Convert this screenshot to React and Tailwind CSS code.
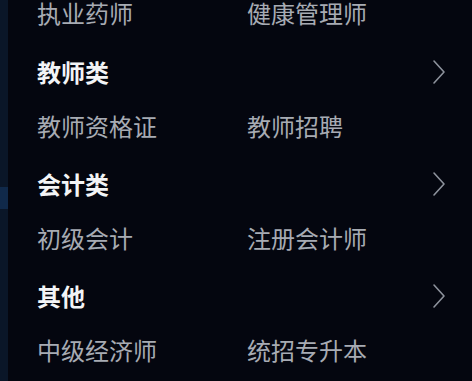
import React from "react";

const sections = [
  { title: null, items: ["执业药师", "健康管理师"] },
  { title: "教师类", items: ["教师资格证", "教师招聘"] },
  { title: "会计类", items: ["初级会计", "注册会计师"] },
  { title: "其他", items: ["中级经济师", "统招专升本"] },
];

function Chevron() {
  return (
    <svg width="14" height="26" viewBox="0 0 14 26" fill="none">
      <polyline
        points="2,2 12,13 2,24"
        stroke="#8d929c"
        strokeWidth="1.6"
        strokeLinecap="round"
        strokeLinejoin="round"
      />
    </svg>
  );
}

export default function App() {
  return (
    <div
      className="w-[472px] h-[381px] overflow-hidden flex bg-[#04060f]"
      style={{ fontFamily: '"Noto Sans CJK SC", "Noto Sans", sans-serif' }}
    >
      {/* left rail */}
      <div className="w-[8px] shrink-0 flex flex-col bg-[#0a1628]">
        <div className="h-[187px]" />
        <div className="h-[22px] bg-[#10294a]" />
      </div>

      <div className="flex-1 pl-[29px] pr-[26px]">
        {sections.map((s, i) => (
          <div key={i}>
            {s.title && (
              <div className="h-[54px] flex items-center justify-between">
                <span className="text-[24px] leading-[24px] font-bold text-[#f3f4f6]">
                  {s.title}
                </span>
                <Chevron />
              </div>
            )}
            <div
              className={
                s.title
                  ? "h-[58px] pt-[15px] grid grid-cols-[210px_1fr]"
                  : "h-[45px] pt-[1px] grid grid-cols-[210px_1fr]"
              }
            >
              {s.items.map((it) => (
                <span
                  key={it}
                  className="text-[24px] leading-[24px] text-[#a7abb3]"
                >
                  {it}
                </span>
              ))}
            </div>
          </div>
        ))}
      </div>
    </div>
  );
}
